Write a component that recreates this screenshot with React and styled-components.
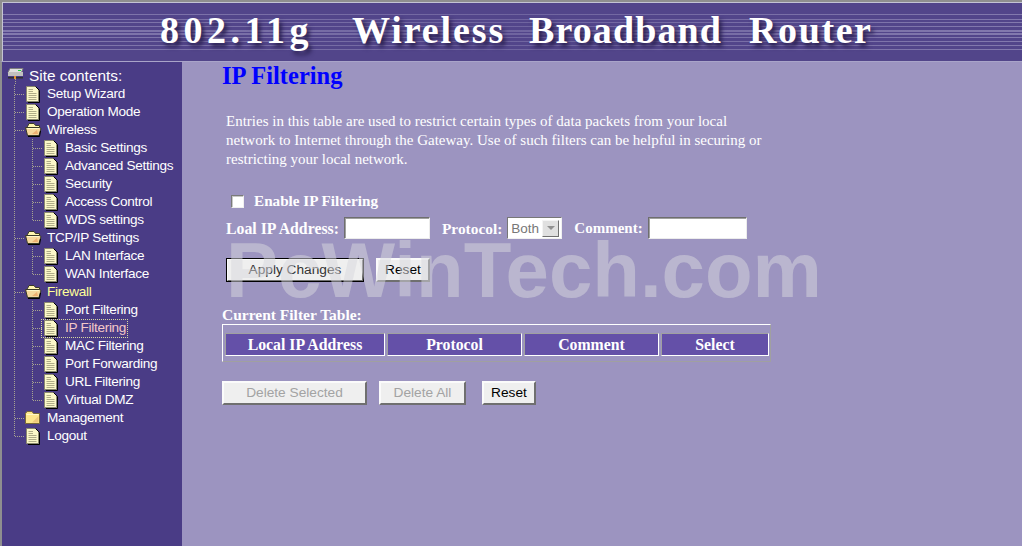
import React from 'react';
import styled, { createGlobalStyle } from 'styled-components';

const Global = createGlobalStyle`
  html, body { margin: 0; padding: 0; height: 100%; overflow: hidden; background: #9c94c0; }
  #root { height: 100%; }
`;

const Frame = styled.div`
  position: relative;
  height: 546px;
  display: flex;
  flex-direction: column;
  overflow: hidden;
`;

const Banner = styled.header`
  height: 59px;
  flex: none;
  border-top: 2px solid #8f8f8f;
  border-left: 2px solid #8f8f8f;
  border-bottom: 1px solid #a9a4c9;
  background-color: #52458a;
  box-shadow: inset 1px 1px 0 #c4c4d4;
  position: relative;
  overflow: hidden;
`;

const Stripes = styled.svg`
  position: absolute;
  left: 1px;
  top: 0;
`;

const BannerTitle = styled.h1`
  position: relative;
  display: flex;
  margin: 6px 0 0 158px;
  font: bold 38px/44px "Liberation Serif", serif;
  white-space: pre;
  color: #fff;
  text-shadow: 3px 4px 4px #2a2050;
`;

const TitleWord = styled.span`
  display: block;
  width: ${p => p.$w}px;
  letter-spacing: ${p => p.$ls}px;
`;

const Body = styled.div`
  flex: 1;
  display: flex;
  min-height: 0;
`;

const Side = styled.nav`
  box-sizing: border-box;
  width: 182px;
  flex: none;
  border-left: 2px solid #8f8f8f;
  background: #4a3c86;
  padding: 5px 0 0 4px;
  font-family: "Liberation Sans", Arial, sans-serif;
  color: #fff;
`;

const SideHead = styled.div`
  display: flex;
  align-items: flex-start;
  height: 18px;
  font-size: 15.4px;
  line-height: 18px;
`;

const HeadIcon = styled.svg`
  margin-left: 1px;
  margin-right: 5px;
  flex: none;
`;

const Row = styled.div`
  display: flex;
  align-items: center;
  height: 18px;
`;

const Cell = styled.svg`
  display: block;
  flex: none;
`;

const Node = styled.span`
  display: inline-flex;
  align-items: center;
  height: 17px;
  padding-right: 1px;
  ${p => p.$selected && `
    outline: 1px dotted #d8d8a0;
    outline-offset: 0;
  `}
`;

const Label = styled.span`
  margin-left: 5px;
  font-size: 13.6px;
  letter-spacing: -0.3px;
  line-height: 18px;
  white-space: nowrap;
  color: ${p => (p.$tone === 'open' ? '#ffff99' : p.$tone === 'current' ? '#f4c8c8' : '#fff')};
`;

const Main = styled.main`
  flex: 1;
  min-width: 0;
  padding: 0 0 0 40px;
  font-family: "Liberation Serif", "Times New Roman", serif;
  color: #fff;
`;

const PageTitle = styled.h2`
  margin: 0;
  font: bold 24.5px/28px "Liberation Serif", serif;
  color: #0000ff;
`;

const Intro = styled.p`
  margin: 22px 0 0 4px;
  width: 540px;
  font-size: 15px;
  line-height: 19px;
`;

const EnableRow = styled.label`
  display: flex;
  align-items: center;
  height: 20px;
  margin: 22px 0 0 9px;
  font-weight: bold;
  font-size: 15.2px;
`;

const Check = styled.span`
  box-sizing: border-box;
  width: 13px;
  height: 13px;
  margin-right: 10px;
  background: #fff;
  border: 1px solid;
  border-color: #7a7a7a #f0f0f0 #f0f0f0 #7a7a7a;
  box-shadow: inset 1px 1px 0 #c8c8c8;
`;

const FieldRow = styled.div`
  display: flex;
  align-items: center;
  height: 22px;
  margin: 6px 0 0 4px;
  font-weight: bold;
  white-space: nowrap;
`;

const FieldLabel = styled.span`
  font-size: ${p => p.$size}px;
  padding-top: 1px;
`;

const TextBox = styled.span`
  box-sizing: border-box;
  display: block;
  height: 22px;
  width: ${p => p.$w}px;
  margin: 0 ${p => p.$gap || 0}px 0 5px;
  background: #fff;
  border: 1px solid;
  border-color: #6e6e6e #ececec #ececec #6e6e6e;
  box-shadow: inset 1px 1px 0 #a0a0a0;
`;

const SelectBox = styled.span`
  box-sizing: border-box;
  display: flex;
  align-items: center;
  justify-content: space-between;
  width: 55px;
  height: 22px;
  margin: 0 12px 0 5px;
  padding: 0 2px 0 3px;
  background: #fff;
  border: 1px solid;
  border-color: #777 #f0f0f0 #f0f0f0 #777;
  font: normal 13.5px "Liberation Sans", Arial, sans-serif;
  color: #777;
`;

const SelectArrow = styled.span`
  box-sizing: border-box;
  width: 17px;
  height: 17px;
  background: #e0e0e0;
  border: 1px solid;
  border-color: #f4f4f4 #707070 #707070 #f4f4f4;
  display: flex;
  align-items: center;
  justify-content: center;
  &::after {
    content: "";
    border-left: 4px solid transparent;
    border-right: 4px solid transparent;
    border-top: 4px solid #909090;
  }
`;

const ButtonRow = styled.div`
  display: flex;
  align-items: center;
  gap: 12px;
  margin: ${p => p.$top}px 0 0 ${p => p.$left || 0}px;
`;

const Btn = styled.button`
  box-sizing: border-box;
  height: 24px;
  width: ${p => p.$w}px;
  padding: 0 0 2px;
  margin: ${p => (p.$ml ? `0 0 0 ${p.$ml}px` : 0)};
  font: 13.7px "Liberation Sans", Arial, sans-serif;
  background: #efefef;
  color: ${p => (p.disabled ? '#a3a3a3' : '#000')};
  border: 2px solid;
  border-color: #fbfbfb #6f6f6f #6f6f6f #fbfbfb;
  ${p => p.$default && `
    outline: 1px solid #000;
    outline-offset: -1px;
    color: #333;
  `}
`;

const TableTitle = styled.div`
  margin: 24px 0 0 0;
  font-weight: bold;
  font-size: 15.5px;
  line-height: 18px;
`;

const FilterTable = styled.div`
  box-sizing: border-box;
  width: 549px;
  height: 38px;
  padding: 8px 0 0 2px;
  border: 1px solid;
  border-color: #fff #a0a0a0 #a0a0a0 #fff;
  display: flex;
  gap: 2px;
`;

const HeadCell = styled.div`
  box-sizing: border-box;
  height: 23px;
  width: ${p => p.$w}px;
  background: #6450a8;
  border: 1px solid;
  border-color: #a0a0a0 #fff #fff #a0a0a0;
  font-weight: bold;
  font-size: 15.8px;
  line-height: 21px;
  text-align: center;
`;

const Watermark = styled.div`
  position: absolute;
  left: 226px;
  top: 230px;
  font: bold 78px/80px "Liberation Sans", Arial, sans-serif;
  white-space: nowrap;
  color: rgba(215, 215, 222, 0.5);
  pointer-events: none;
`;

const stripes = [
  [14, 1], [19, 1], [22, 1], [26, 1], [30, 2], [33, 2], [37, 1], [41, 1], [45, 1], [49, 1],
];

function BannerStripes() {
  return (
    <Stripes width="1021" height="60" aria-hidden="true">
      <defs>
        <linearGradient id="fade" x1="0" x2="1" y1="0" y2="0">
          <stop offset="0" stopColor="#b4aed2" stopOpacity="0.5" />
          <stop offset="0.5" stopColor="#b4aed2" stopOpacity="0.3" />
          <stop offset="1" stopColor="#b4aed2" stopOpacity="0.5" />
        </linearGradient>
      </defs>
      {stripes.map(([y, h]) => (
        <rect key={y} x="0" y={y - 2} width="1021" height={h} fill="url(#fade)" />
      ))}
    </Stripes>
  );
}

const dots = { stroke: '#a8a490', strokeWidth: 1, strokeDasharray: '1 1', fill: 'none' };

function Guide({ kind }) {
  return (
    <Cell width="18" height="18" aria-hidden="true">
      <line x1="8.5" y1="0" x2="8.5" y2={kind === 'last' ? 9 : 18} {...dots} />
      {(kind === 'tee' || kind === 'last') && <line x1="9" y1="9.5" x2="18" y2="9.5" {...dots} />}
    </Cell>
  );
}

function PageIcon() {
  return (
    <Cell width="18" height="18" aria-hidden="true">
      <path d="M2.5 1.5H11.5L14.5 4.5V16.5H2.5Z" fill="#fbf8c8" stroke="#8a8870" />
      <path d="M11.5 1.5L15.5 5.5V17.5H4" fill="none" stroke="#000" />
      <path d="M4.5 4.5H9M4.5 6.5H9M4.5 8.5H12.5M4.5 10.5H12.5M4.5 12.5H12.5M4.5 14.5H12.5" stroke="#b0ad88" />
    </Cell>
  );
}

function FolderIcon({ open }) {
  return (
    <Cell width="18" height="18" aria-hidden="true">
      {open ? (
        <>
          <path d="M3.5 5.5L5 2.5H10L11.5 4.5H15.5V9H3.5Z" fill="#fff6b0" stroke="#3a3a28" />
          <path d="M1.5 6.5H15.5L17 7.5L15 14.5H3.5Z" fill="#f6d89c" stroke="#3a3a28" />
          <path d="M3 7.5H15" stroke="#fff8c8" />
          <path d="M8 13L13 9L14 13Z" fill="#eeb070" />
          <path d="M16.5 10L15.5 15.5H4" stroke="#000" fill="none" />
        </>
      ) : (
        <>
          <path d="M1.5 4.5L3 2.5H8L9.5 4.5H15.5V14.5H1.5Z" fill="#fde68c" stroke="#7a6a38" />
          <path d="M2.5 5.5H14.5" stroke="#fff8c8" />
          <path d="M8 13.5L14.5 7V13.5Z" fill="#eec87a" />
        </>
      )}
    </Cell>
  );
}

function RouterIcon() {
  return (
    <HeadIcon width="17" height="18" aria-hidden="true">
      <path d="M3 1.5H16L14.5 5.5H1Z" fill="#e0e0e0" stroke="#808080" />
      <rect x="1" y="5" width="15" height="4" fill="#c0c0c0" />
      <rect x="11" y="3" width="3" height="1" fill="#20d040" />
      <rect x="1" y="10" width="15" height="1.5" fill="#303030" />
      <rect x="7" y="9" width="2" height="3" fill="#e09030" />
      <line x1="8.5" y1="12" x2="8.5" y2="18" {...dots} />
    </HeadIcon>
  );
}

const tree = [
  { t: 'Setup Wizard', g: ['tee'] },
  { t: 'Operation Mode', g: ['tee'] },
  { t: 'Wireless', g: ['tee'], folder: 'open' },
  { t: 'Basic Settings', g: ['line', 'tee'] },
  { t: 'Advanced Settings', g: ['line', 'tee'] },
  { t: 'Security', g: ['line', 'tee'] },
  { t: 'Access Control', g: ['line', 'tee'] },
  { t: 'WDS settings', g: ['line', 'last'] },
  { t: 'TCP/IP Settings', g: ['tee'], folder: 'open' },
  { t: 'LAN Interface', g: ['line', 'tee'] },
  { t: 'WAN Interface', g: ['line', 'last'] },
  { t: 'Firewall', g: ['tee'], folder: 'open', tone: 'open' },
  { t: 'Port Filtering', g: ['line', 'tee'] },
  { t: 'IP Filtering', g: ['line', 'tee'], tone: 'current', selected: true },
  { t: 'MAC Filtering', g: ['line', 'tee'] },
  { t: 'Port Forwarding', g: ['line', 'tee'] },
  { t: 'URL Filtering', g: ['line', 'tee'] },
  { t: 'Virtual DMZ', g: ['line', 'last'] },
  { t: 'Management', g: ['tee'], folder: 'closed' },
  { t: 'Logout', g: ['last'] },
];

export default function App() {
  return (
    <Frame>
      <Global />
      <Banner>
        <BannerStripes />
        <BannerTitle>
          <TitleWord $w={192} $ls={4.5}>802.11g</TitleWord>
          <TitleWord $w={177} $ls={1.9}>Wireless</TitleWord>
          <TitleWord $w={220} $ls={1.1}>Broadband</TitleWord>
          <TitleWord $w={130} $ls={1.6}>Router</TitleWord>
        </BannerTitle>
      </Banner>
      <Body>
        <Side>
          <SideHead>
            <RouterIcon />
            Site contents:
          </SideHead>
          {tree.map(item => (
            <Row key={item.t}>
              {item.g.map((k, i) => <Guide key={i} kind={k} />)}
              <Node $selected={item.selected}>
                {item.folder ? <FolderIcon open={item.folder === 'open'} /> : <PageIcon />}
                <Label $tone={item.tone}>{item.t}</Label>
              </Node>
            </Row>
          ))}
        </Side>
        <Main>
          <PageTitle>IP Filtering</PageTitle>
          <Intro>
            Entries in this table are used to restrict certain types of data packets from your local
            network to Internet through the Gateway. Use of such filters can be helpful in securing or
            restricting your local network.
          </Intro>
          <EnableRow><Check />Enable IP Filtering</EnableRow>
          <FieldRow>
            <FieldLabel $size={15.8}>Loal IP Address:</FieldLabel>
            <TextBox $w={86} $gap={12} />
            <FieldLabel $size={15.4}>Protocol:</FieldLabel>
            <SelectBox>Both<SelectArrow /></SelectBox>
            <FieldLabel $size={15}>Comment:</FieldLabel>
            <TextBox $w={99} />
          </FieldRow>
          <ButtonRow $top={19} $left={4}>
            <Btn $w={138} $default>Apply Changes</Btn>
            <Btn $w={54}>Reset</Btn>
          </ButtonRow>
          <TableTitle>Current Filter Table:</TableTitle>
          <FilterTable>
            <HeadCell $w={160}>Local IP Address</HeadCell>
            <HeadCell $w={135}>Protocol</HeadCell>
            <HeadCell $w={135}>Comment</HeadCell>
            <HeadCell $w={108}>Select</HeadCell>
          </FilterTable>
          <ButtonRow $top={19}>
            <Btn $w={145} disabled>Delete Selected</Btn>
            <Btn $w={87} disabled>Delete All</Btn>
            <Btn $w={54} $ml={4}>Reset</Btn>
          </ButtonRow>
        </Main>
      </Body>
      <Watermark>PcWinTech.com</Watermark>
    </Frame>
  );
}
